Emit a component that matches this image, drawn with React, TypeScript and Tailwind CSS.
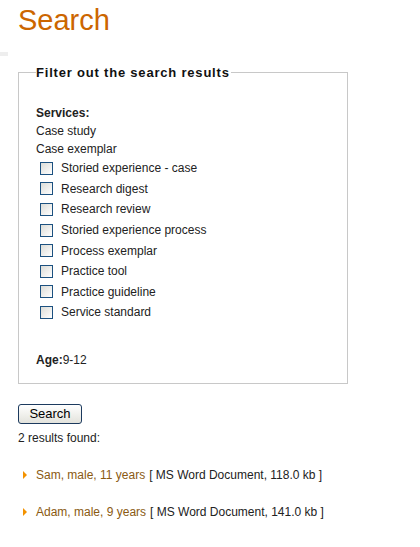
import React from 'react';

const services = [
  'Storied experience - case',
  'Research digest',
  'Research review',
  'Storied experience process',
  'Process exemplar',
  'Practice tool',
  'Practice guideline',
  'Service standard',
];

const results = [
  { name: 'Sam, male, 11 years', info: '[ MS Word Document, 118.0 kb ]' },
  { name: 'Adam, male, 9 years', info: '[ MS Word Document, 141.0 kb ]' },
];

export default function App() {
  return (
    <div className="min-h-[547px] w-[420px] bg-white text-[12px] leading-[18px] text-[#222] font-['Liberation_Sans',Arial,sans-serif]">
      <h1 className="pl-[18px] pt-[3px] text-[29px] leading-[34px] text-[#cc6600]">Search</h1>
      <div className="mt-[15px] h-[4px] w-[8px] bg-[#eeeeee]" />

      <fieldset className="mx-[18px] mt-[9px] w-[330px] border border-[#c8c8c8] pl-[17px] pb-[14px]">
        <legend className="pr-[1px] text-[13px] font-bold leading-[15px] tracking-[0.8px] text-[#111]">
          Filter out the search results
        </legend>
        <div className="pt-[24px]">
          <div className="font-bold">Services:</div>
          <div>Case study</div>
          <div>Case exemplar</div>
          <ul>
            {services.map((s) => (
              <li key={s} className="flex h-[20.6px] items-center pl-[4px]">
                <span className="h-[13px] w-[13px] shrink-0 border border-[#1c5180] bg-gradient-to-br from-[#dcdcd7] to-white" />
                <span className="ml-[8px]">{s}</span>
              </li>
            ))}
          </ul>
          <div className="mt-[28px]">
            <span className="font-bold">Age:</span>9-12
          </div>
        </div>
      </fieldset>

      <div className="px-[18px] pt-[20px]">
        <button className="h-[20px] w-[64px] rounded-[3px] border border-[#1c3a5e] bg-gradient-to-b from-white to-[#e3e3dc] text-[13px] leading-[16px] text-black">
          Search
        </button>
        <div className="mt-[5px]">2 results found:</div>
        <ul className="mt-[10px]">
          {results.map((r) => (
            <li key={r.name} className="flex h-[36.5px] items-center">
              <span className="ml-[5px] h-0 w-0 border-y-[4px] border-l-[4px] border-y-transparent border-l-[#f39200]" />
              <span className="ml-[9px] text-[#8a5a12]">{r.name}</span>
              <span className="ml-[4px]">{r.info}</span>
            </li>
          ))}
        </ul>
      </div>
    </div>
  );
}
